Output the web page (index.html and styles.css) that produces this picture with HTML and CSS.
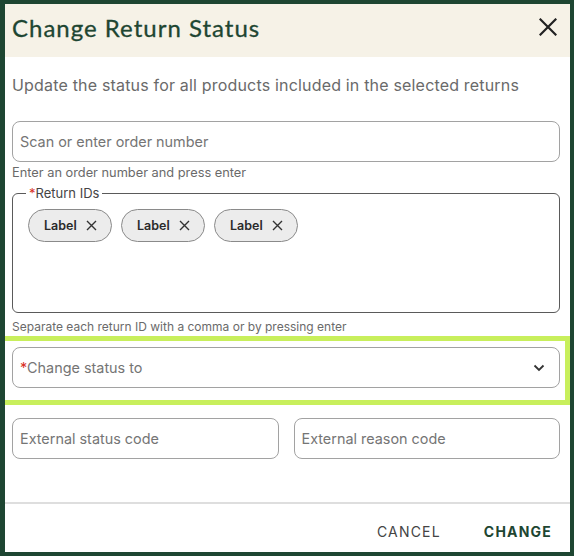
FILE: index.html
```html
<!DOCTYPE html>
<html lang="en">
<head>
<meta charset="utf-8">
<title>Change Return Status</title>
<link rel="stylesheet" href="styles.css">
</head>
<body>
<div class="dialog">
  <div class="header">
    <h1 class="title">Change Return Status</h1>
    <button class="close" aria-label="Close">
      <svg width="18" height="18" viewBox="0 0 18 18"><path d="M1.5 1.5 L16.5 16.5 M16.5 1.5 L1.5 16.5" stroke="#222" stroke-width="2.2" fill="none" stroke-linecap="square"/></svg>
    </button>
  </div>
  <div class="body">
    <p class="subtitle">Update the status for all products included in the selected returns</p>
    <div class="input">Scan or enter order number</div>
    <p class="helper first">Enter an order number and press enter</p>
    <fieldset class="ids">
      <legend><span class="req">*</span>Return IDs</legend>
      <div class="chips">
        <span class="chip">Label <svg width="11" height="11" viewBox="0 0 11 11"><path d="M1 1 L10 10 M10 1 L1 10" stroke="#333" stroke-width="1.4" fill="none"/></svg></span>
        <span class="chip">Label <svg width="11" height="11" viewBox="0 0 11 11"><path d="M1 1 L10 10 M10 1 L1 10" stroke="#333" stroke-width="1.4" fill="none"/></svg></span>
        <span class="chip">Label <svg width="11" height="11" viewBox="0 0 11 11"><path d="M1 1 L10 10 M10 1 L1 10" stroke="#333" stroke-width="1.4" fill="none"/></svg></span>
      </div>
    </fieldset>
    <p class="helper second">Separate each return ID with a comma or by pressing enter</p>
    <div class="highlight">
      <div class="input select">
        <span><span class="req">*</span>Change status to</span>
        <svg width="12" height="8" viewBox="0 0 12 8"><path d="M1.5 1.5 L6 6 L10.5 1.5" stroke="#333" stroke-width="1.8" fill="none"/></svg>
      </div>
    </div>
    <div class="row">
      <div class="input">External status code</div>
      <div class="input">External reason code</div>
    </div>
  </div>
  <div class="footer">
    <button class="btn cancel">CANCEL</button>
    <button class="btn change">CHANGE</button>
  </div>
</div>
</body>
</html>
```
FILE: styles.css
```css
html, body {
  margin: 0;
  padding: 0;
}
body {
  background: #1e4632;
  padding: 4px 4px 4px 5px;
  width: 565px;
  height: 548px;
  font-family: Inter, "Liberation Sans", sans-serif;
}
.dialog {
  width: 565px;
  height: 548px;
  background: #ffffff;
  display: flex;
  flex-direction: column;
}
.header {
  height: 53px;
  box-sizing: border-box;
  flex: none;
  background: #f6f2e7;
  display: flex;
  align-items: center;
  justify-content: space-between;
  padding: 0 13px 7px 7px;
}
.title {
  margin: 0;
  font-family: Lato, "Open Sans", sans-serif;
  font-weight: 400;
  font-size: 24px;
  letter-spacing: 1px;
  color: #1e4632;
  -webkit-text-stroke: 0.3px #1e4632;
}
.close {
  border: 0;
  background: none;
  padding: 0;
  width: 18px;
  height: 18px;
  display: block;
}
.close svg { display: block; }
.body {
  flex: 1;
  padding: 0 10px 0 7px;
}
.subtitle {
  margin: 16px 0 0;
  font-size: 16px;
  line-height: 24px;
  letter-spacing: 0.18px;
  color: #6a6a6a;
}
.input {
  box-sizing: border-box;
  height: 41px;
  border: 1px solid #a2a2a2;
  border-radius: 8px;
  padding: 0 8px 0 7px;
  display: flex;
  align-items: center;
  font-size: 14.4px;
  color: #757575;
}
.body > .input { margin-top: 24px; }
.helper {
  margin: 0;
  font-size: 12px;
  line-height: 16px;
  color: #6a6a6a;
}
.helper.first { margin-top: 3px; font-size: 12.8px; }
.helper.second { margin-top: 6px; }
.ids {
  margin: 4px 0 0;
  padding: 8px 15px 0;
  border: 1px solid #5a5a5a;
  border-radius: 6px;
  height: 128px;
  box-sizing: border-box;
}
.ids legend {
  font-size: 13px;
  line-height: 16px;
  color: #444;
  padding: 0 3px;
  margin-left: -2px;
}
.req { color: #d93025; }
.chips {
  display: flex;
  gap: 9px;
}
.chip {
  box-sizing: border-box;
  height: 33px;
  width: 84px;
  border: 1px solid #8a8a8a;
  border-radius: 17px;
  background: #ececec;
  display: flex;
  align-items: center;
  gap: 9px;
  padding-left: 15px;
  font-size: 12.5px;
  font-weight: 600;
  color: #2a2a2a;
}
.highlight {
  margin: 1px -10px 0 -7px;
  border: 5px solid #c8ef5c;
  border-left: 0;
  padding: 6px 5px 12px 7px;
}
.select {
  justify-content: space-between;
  padding-right: 14px;
}
.row {
  margin-top: 13px;
  display: grid;
  grid-template-columns: 1fr 1fr;
  gap: 15px;
}
.footer {
  flex: none;
  height: 50px;
  box-sizing: border-box;
  border-top: 2px solid #dedede;
  display: flex;
  justify-content: flex-end;
  align-items: center;
  gap: 27px;
  padding: 7px 10px 0 0;
}
.btn {
  border: 0;
  background: none;
  font-family: Inter, "Liberation Sans", sans-serif;
  font-size: 14px;
  letter-spacing: 1.2px;
  padding: 6px 8px;
}
.cancel { color: #444; font-weight: 400; }
.change { color: #1e4632; font-weight: 700; }
```
